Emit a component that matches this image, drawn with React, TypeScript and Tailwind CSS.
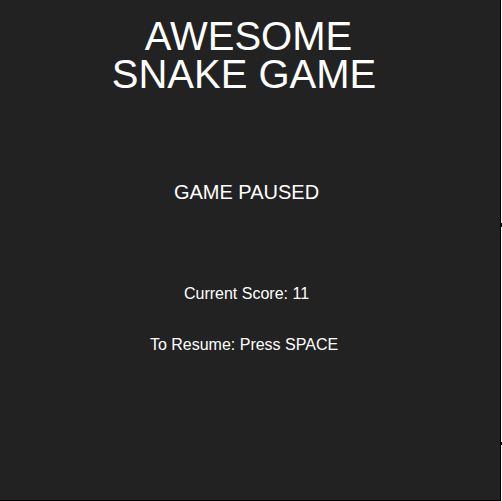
export default function App() {
  return (
    <div className="w-[502px] h-[501px] bg-white flex items-start">
      <div className="w-[501px] h-[501px] bg-[#222222] border-r border-b border-black flex flex-col items-start text-white font-['Liberation_Sans',Arial,sans-serif]">
        <div className="w-[493px] flex flex-col items-center">
          <div className="mt-[17px] pr-[5px] text-[40px] leading-[38px] text-center">
            <div className="pl-[9px]">AWESOME</div>
            <div>SNAKE GAME</div>
          </div>
          <div className="mt-[87px] text-[20px] leading-[24px]">GAME PAUSED</div>
          <div className="mt-[80px] text-[16px] leading-[20px]">Current Score: 11</div>
          <div className="mt-[31px] pr-[5px] text-[16px] leading-[20px]">To Resume: Press SPACE</div>
        </div>
      </div>
      <div className="w-px h-[501px] flex flex-col">
        <div className="h-[223px]" />
        <div className="h-[4px] bg-[#1d2a1d]" />
        <div className="h-[215px]" />
        <div className="h-[3px] bg-[#1d2a1d]" />
      </div>
    </div>
  );
}
